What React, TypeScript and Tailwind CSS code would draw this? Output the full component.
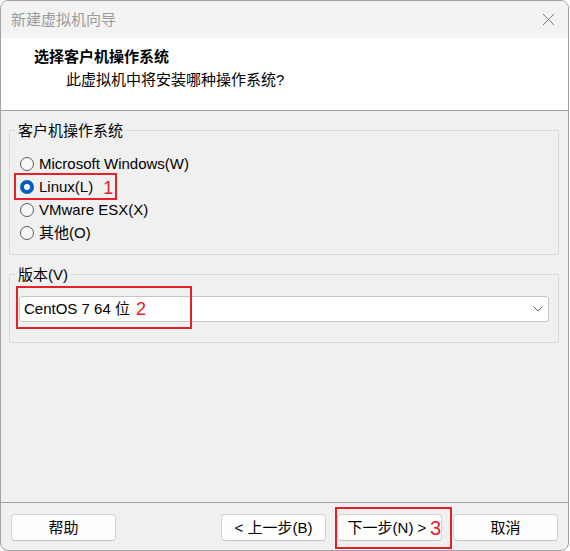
import React from "react";

const font = "font-['Liberation_Sans','Noto_Sans_CJK_SC',sans-serif]";

function Radio({ checked }: { checked?: boolean }) {
  if (checked) {
    return (
      <span className="flex h-[14px] w-[14px] shrink-0 items-center justify-center rounded-full bg-[#005fb8]">
        <span className="h-[6px] w-[6px] rounded-full bg-white" />
      </span>
    );
  }
  return <span className="h-[14px] w-[14px] shrink-0 rounded-full border border-[#5c5c5c] bg-[#f7f7f7]" />;
}

function Button({ children }: { children: React.ReactNode }) {
  return (
    <button className="flex h-[27px] w-[105px] items-center justify-center rounded-[4px] border border-[#d3d3d3] border-b-[#c2c2c2] bg-[#fdfdfd] text-[15px] leading-[20px] text-black">
      {children}
    </button>
  );
}

export default function App() {
  const options = [
    { label: "Microsoft Windows(W)", checked: false },
    { label: "Linux(L)", checked: true },
    { label: "VMware ESX(X)", checked: false },
    { label: "其他(O)", checked: false },
  ];

  return (
    <div className={`h-[551px] w-[570px] bg-white ${font}`}>
      <div className="flex h-[551px] w-[569px] flex-col overflow-hidden rounded-[8px] border border-[#a3a3a3] bg-[#f0f0f0] text-[15px] leading-[20px] text-black">
        {/* title bar */}
        <div className="flex h-[37px] shrink-0 items-center justify-between bg-[#f3f3f3] pl-[10px] pr-[13px]">
          <span className="text-[#9b9b9b]">新建虚拟机向导</span>
          <svg width="13" height="13" viewBox="0 0 13 13" fill="none">
            <path d="M1 1l11 11M12 1L1 12" stroke="#7a7a7a" strokeWidth="1" />
          </svg>
        </div>

        {/* header */}
        <div className="h-[73px] shrink-0 border-b border-[#a0a0a0] bg-white pl-[33px] pt-[9px]">
          <div className="font-bold">选择客户机操作系统</div>
          <div className="ml-[32px] mt-[3px]">此虚拟机中将安装哪种操作系统?</div>
        </div>

        {/* content */}
        <div className="flex-1 pl-[8px] pr-[9px] pt-[19px]">
          <div className="relative border border-[#dadada] pb-[10px] pl-[10px] pt-[21px]">
            <span className="absolute -top-[10px] left-[6px] bg-[#f0f0f0] px-[2px]">客户机操作系统</span>
            {options.map((o) => (
              <div key={o.label} className="flex h-[23px] items-center gap-[5px]">
                <Radio checked={o.checked} />
                <span>{o.label}</span>
                {o.checked && (
                  <span className="ml-[5px] mt-[2px] text-[18px] leading-[20px] text-[#e5202a]">1</span>
                )}
              </div>
            ))}
            <div className="absolute left-[4px] top-[42px] h-[27px] w-[103px] border-2 border-[#e5202a]" />
          </div>

          <div className="relative mt-[19px] border border-[#dadada] px-[9px] pb-[20px] pt-[21px]">
            <span className="absolute -top-[10px] left-[6px] bg-[#f0f0f0] px-[2px]">版本(V)</span>
            <div className="flex h-[26px] items-center justify-between rounded-[3px] border border-[#c6c6c6] bg-white pl-[4px] pr-[5px]">
              <div className="flex items-center">
                <span>CentOS 7 64 位</span>
                <span className="ml-[6px] text-[18px] text-[#e5202a]">2</span>
              </div>
              <svg width="10" height="6" viewBox="0 0 10 6" fill="none">
                <path d="M0.5 0.5l4.5 4.5 4.5-4.5" stroke="#606060" strokeWidth="1" />
              </svg>
            </div>
            <div className="absolute left-[6px] top-[11px] h-[43px] w-[176px] border-2 border-[#e5202a]" />
          </div>
        </div>

        {/* footer */}
        <div className="flex h-[48px] shrink-0 justify-between border-t border-[#a0a0a0] pl-[10px] pr-[10px] pt-[11px]">
          <Button>帮助</Button>
          <div className="flex gap-[11px]">
            <Button>&lt; 上一步(B)</Button>
            <div className="relative">
              <button className="relative flex h-[27px] w-[105px] items-center justify-center rounded-[4px] border border-[#d3d3d3] border-b-[#c2c2c2] bg-[#fdfdfd] pr-[5px] text-[15px] leading-[20px] text-black">
                下一步(N) &gt;
                <span className="absolute right-[0px] top-[3px] text-[20px] leading-[20px] text-[#e5202a]">3</span>
              </button>
              <div className="absolute -left-[2px] -top-[7px] h-[42px] w-[117px] border-2 border-[#e5202a]" />
            </div>
            <Button>取消</Button>
          </div>
        </div>
      </div>
    </div>
  );
}
